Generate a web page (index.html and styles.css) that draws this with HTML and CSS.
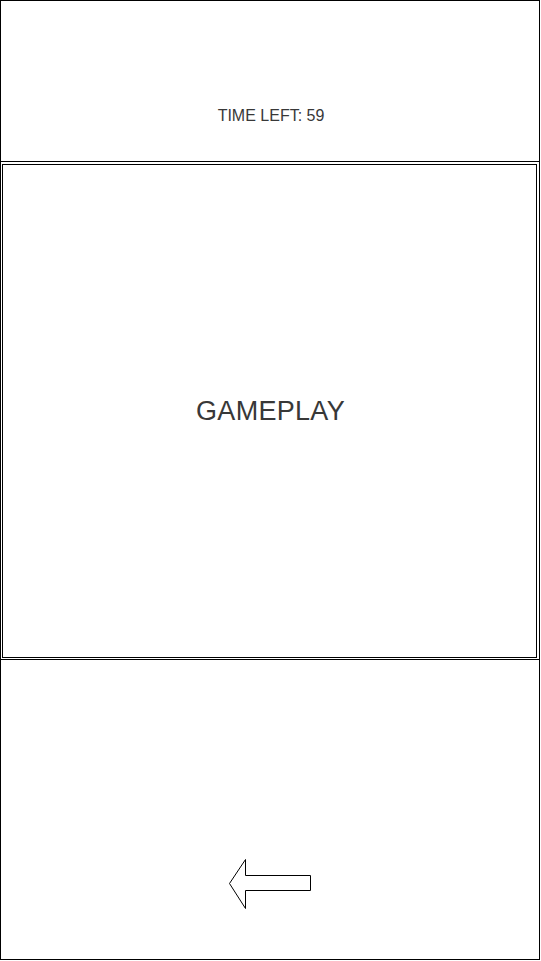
FILE: index.html
```html
<!DOCTYPE html>
<html>
<head>
<meta charset="utf-8">
<link rel="stylesheet" href="styles.css">
</head>
<body>
<div class="frame">
  <header class="top">
    <div class="timer">TIME LEFT: 59</div>
  </header>
  <section class="game">
    <div class="game-box">
      <div class="game-label">GAMEPLAY</div>
    </div>
  </section>
  <footer class="bottom">
    <svg class="arrow" width="83" height="51" viewBox="0 0 83 51">
      <polygon points="0.5,24.5 16.5,0.5 16.5,16.5 81.5,16.5 81.5,31.5 16.5,31.5 16.5,49.5" fill="#fff" stroke="#000" stroke-width="1"/>
    </svg>
  </footer>
</div>
</body>
</html>
```
FILE: styles.css
```css
html, body {
  margin: 0;
  padding: 0;
  background: #fff;
}
body {
  font-family: "Liberation Sans", Arial, sans-serif;
  color: #383838;
}
.frame {
  width: 540px;
  height: 960px;
  box-sizing: border-box;
  border: 1px solid #000;
  display: flex;
  flex-direction: column;
}
.top {
  height: 161px;
  box-sizing: border-box;
  border-bottom: 1px solid #000;
  padding-top: 105px;
  display: flex;
  justify-content: center;
  flex: none;
}
.timer {
  font-size: 16px;
  line-height: 20px;
  padding-left: 2px;
}
.game {
  flex: none;
  padding: 2px 2px 1px 1px;
  border-bottom: 1px solid #000;
}
.game-box {
  height: 494px;
  box-sizing: border-box;
  border: 1px solid #000;
  display: flex;
  align-items: center;
  justify-content: center;
}
.game-label {
  font-size: 27px;
  line-height: 32px;
  padding-left: 2px;
  letter-spacing: 0.3px;
}
.bottom {
  flex: 1;
  display: flex;
  flex-direction: column;
  align-items: center;
  justify-content: flex-end;
  padding-bottom: 49px;
}
.arrow {
  display: block;
  margin-left: 1px;
}
```
